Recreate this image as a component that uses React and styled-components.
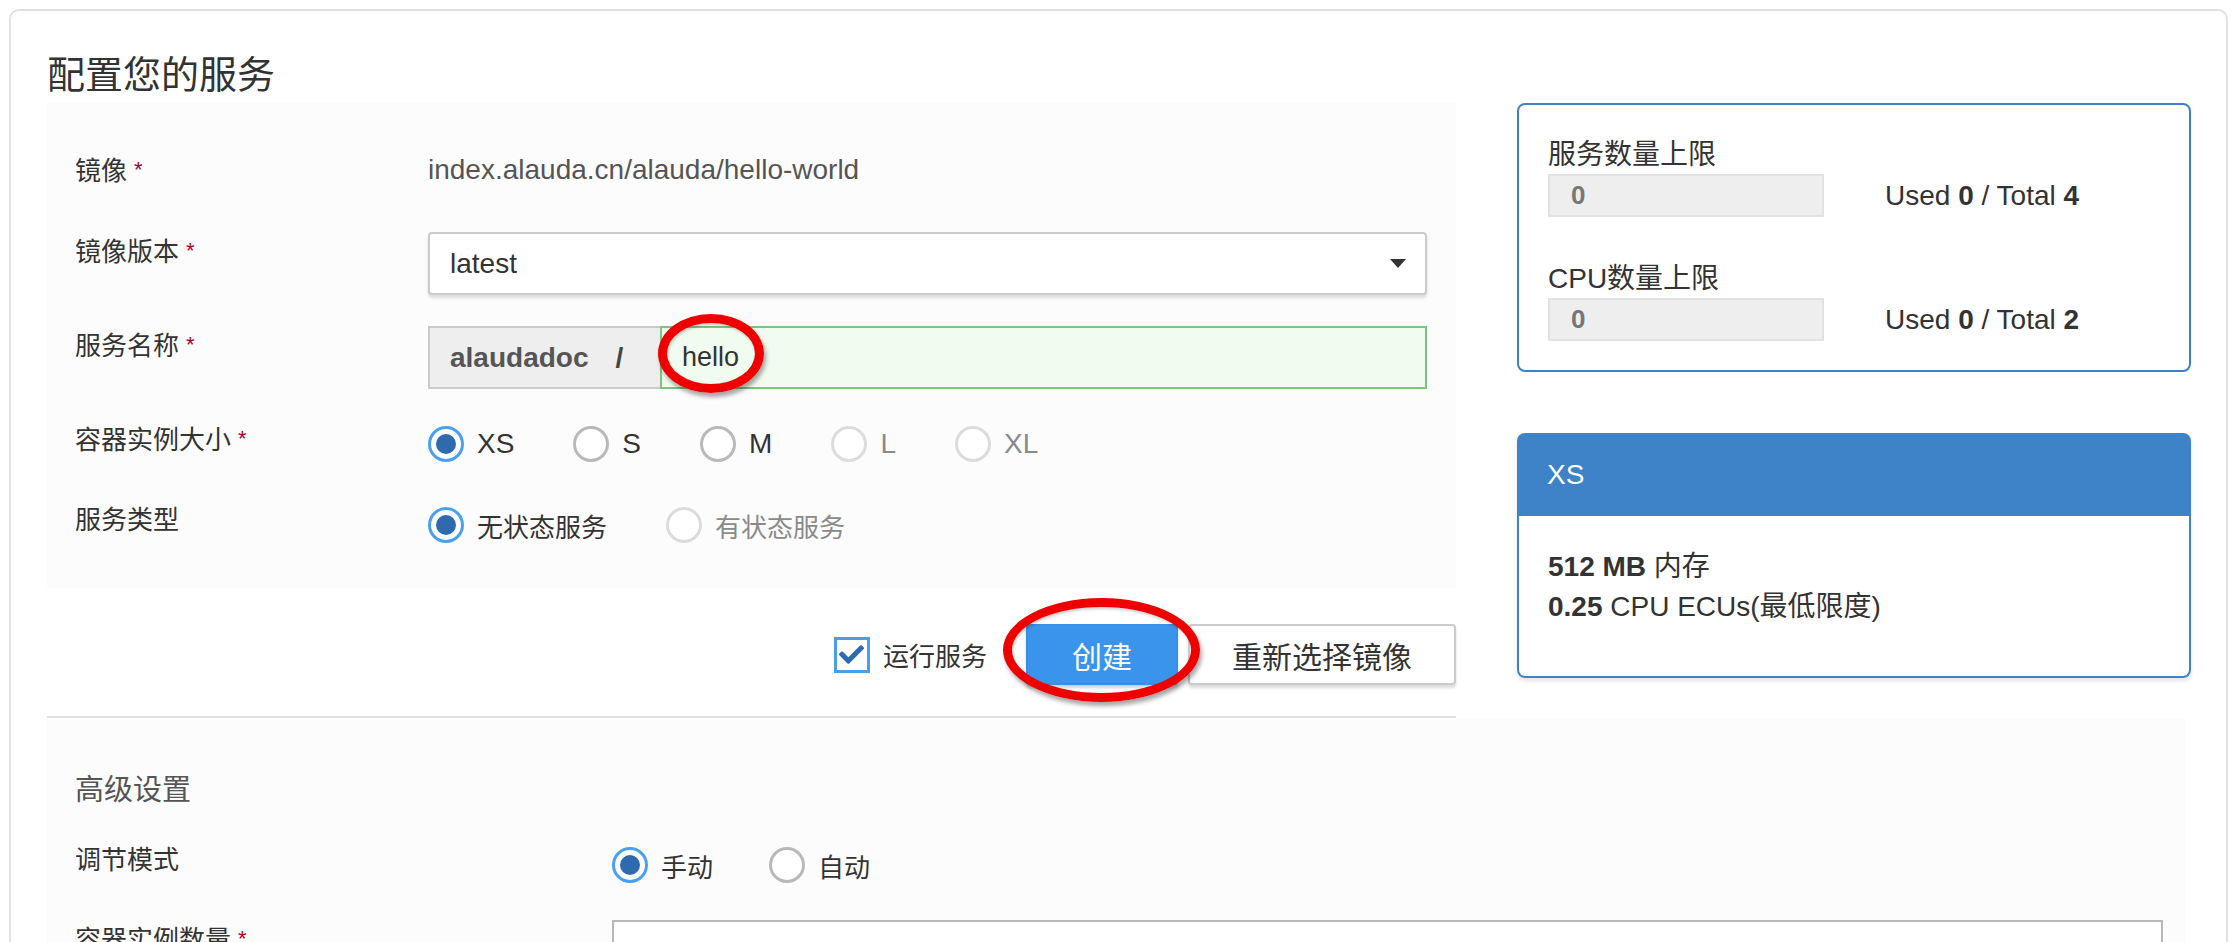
import React from "react";
import styled, { createGlobalStyle } from "styled-components";
import { FaCheck } from "react-icons/fa";

const GlobalStyle = createGlobalStyle`
  html, body { margin: 0; padding: 0; background: #fff; overflow: hidden; }
  body { font-family: "Liberation Sans", "Noto Sans CJK SC", sans-serif; color: #333; }
  * { box-sizing: border-box; }
`;

const Page = styled.div`
  padding: 9px 6px 0 9px;
  height: 942px;
`;

const Card = styled.div`
  border: 2px solid #e1e1e1;
  border-bottom: none;
  border-radius: 10px 10px 0 0;
  padding: 41px 35px 60px 36px;
  min-height: 1000px;
`;

const Title = styled.h1`
  margin: 0 0 5px;
  font-size: 38px;
  line-height: 46px;
  font-weight: normal;
  color: #333;
`;

const TopRow = styled.div`
  display: flex;
  gap: 61px;
  align-items: flex-start;
`;

const LeftCol = styled.div`
  flex: 0 0 1409px;
`;

const RightCol = styled.div`
  flex: 0 0 674px;
`;

const FormArea = styled.div`
  background: #fcfcfc;
  padding: 35px 29px 37px 28px;
`;

const FormRow = styled.div`
  display: flex;
  align-items: flex-start;
  margin-bottom: ${(p) => p.$gap ?? 31}px;
  &:last-child { margin-bottom: 0; }
`;

const Label = styled.div`
  flex: 0 0 ${(p) => p.$width}px;
  font-size: 26px;
  line-height: 38px;
  padding-top: ${(p) => p.$pad || 0}px;
  color: #333;
`;

const Req = styled.span`
  color: #a3002c;
  font-size: 22px;
  margin-left: 7px;
  vertical-align: 3px;
`;

const Control = styled.div`
  flex: 1;
`;

const StaticValue = styled.div`
  padding: 13px 0 12px;
  font-size: 28px;
  line-height: 38px;
  color: #555;
`;

const Select = styled.div`
  height: 63px;
  border: 2px solid #cbcbcb;
  border-radius: 4px;
  background: #fff;
  box-shadow: 0 3px 3px rgba(0, 0, 0, 0.12);
  display: flex;
  align-items: center;
  justify-content: space-between;
  padding: 0 19px 0 20px;
  font-size: 28px;
  color: #333;
`;

const Caret = styled.span`
  width: 0;
  height: 0;
  border-left: 8px solid transparent;
  border-right: 8px solid transparent;
  border-top: 9px solid #333;
`;

const InputGroup = styled.div`
  display: flex;
  height: 63px;
`;

const Addon = styled.div`
  flex: 0 0 232px;
  background: #eee;
  border: 2px solid #cbcbcb;
  border-right: none;
  display: flex;
  align-items: center;
  padding-left: 20px;
  font-size: 28px;
  font-weight: bold;
  color: #555;
`;

const Slash = styled.span`
  margin-left: 27px;
  color: #444;
`;

const ValidField = styled.div`
  position: relative;
  flex: 1;
  background: #effcef;
  border: 2px solid #7dc47d;
  display: flex;
  align-items: center;
  padding-left: 20px;
  font-size: 27px;
  color: #333;
`;

const Mark = styled.span`
  position: absolute;
  left: ${(p) => p.$left}px;
  top: ${(p) => p.$top}px;
  width: ${(p) => p.$w}px;
  height: ${(p) => p.$h}px;
  border: 9px solid #ee0000;
  border-radius: 50%;
  box-shadow: 2px 4px 4px rgba(0, 0, 0, 0.35), inset 1px 2px 3px rgba(0, 0, 0, 0.2);
  pointer-events: none;
  z-index: 2;
`;

const RadioGroup = styled.div`
  display: flex;
  gap: ${(p) => p.$gap || 58}px;
  padding-top: 6px;
  height: 50px;
`;

const RadioItem = styled.label`
  display: flex;
  align-items: center;
  gap: 13px;
  font-size: ${(p) => (p.$cjk ? 26 : 28)}px;
  color: ${(p) => (p.$disabled ? "#8a8a8a" : "#333")};
  height: 36px;
`;

const Circle = styled.span`
  width: 36px;
  height: 36px;
  border-radius: 50%;
  background: #fff;
  border: 3px solid ${(p) => (p.$checked ? "#4aa0f0" : p.$disabled ? "#dcdcdc" : "#b9b9b9")};
  display: flex;
  align-items: center;
  justify-content: center;
  &::after {
    content: "";
    display: ${(p) => (p.$checked ? "block" : "none")};
    width: 20px;
    height: 20px;
    border-radius: 50%;
    background: #2e6aad;
  }
`;

const Actions = styled.div`
  display: flex;
  justify-content: flex-end;
  align-items: center;
  margin-top: 36px;
  height: 61px;
`;

const CheckLabel = styled.label`
  display: flex;
  align-items: center;
  gap: 13px;
  margin-right: 39px;
  font-size: 26px;
  color: #333;
`;

const CheckBox = styled.span`
  width: 36px;
  height: 36px;
  border: 3px solid #4a9fe8;
  background: #fff;
  display: flex;
  align-items: center;
  justify-content: center;
  color: #2d6bb0;
`;

const BtnWrap = styled.div`
  position: relative;
  margin-right: ${(p) => p.$mr || 0}px;
`;

const Button = styled.button`
  height: 61px;
  padding: 0 ${(p) => p.$px}px;
  font-family: inherit;
  font-size: 30px;
  border-radius: 4px;
  border: 2px solid ${(p) => (p.$primary ? "#3790e6" : "#cbcbcb")};
  background: ${(p) => (p.$primary ? "#3a94ec" : "#fff")};
  color: ${(p) => (p.$primary ? "#fff" : "#333")};
  box-shadow: 0 3px 3px rgba(0, 0, 0, ${(p) => (p.$primary ? 0.18 : 0.14)});
`;

const Divider = styled.div`
  margin-top: 31px;
  height: 2px;
  background: #e2e2e2;
`;

const Advanced = styled.div`
  margin: 1px 6px 0 0;
  background: #fcfcfc;
  padding: 51px 22px 40px 28px;
`;

const AdvTitle = styled.div`
  font-size: 29px;
  line-height: 40px;
  color: #555;
  margin-bottom: 31px;
`;

const TextInput = styled.div`
  height: 63px;
  background: #fff;
  border: 2px solid #b8b8b8;
`;

const QuotaBox = styled.div`
  border: 2px solid #3f80c8;
  border-radius: 8px;
  background: #fff;
  padding: 31px 29px 29px 29px;
`;

const QuotaGroup = styled.div`
  & + & { margin-top: 43px; }
`;

const QuotaLabel = styled.div`
  font-size: 28px;
  line-height: 38px;
  color: #333;
`;

const QuotaLine = styled.div`
  display: flex;
  align-items: center;
  gap: 61px;
`;

const QuotaInput = styled.div`
  flex: 0 0 276px;
  height: 43px;
  background: #eee;
  border: 2px solid #e2e2e2;
  display: flex;
  align-items: center;
  padding-left: 21px;
  font-size: 26px;
  font-weight: bold;
  color: #777;
`;

const UsedText = styled.div`
  font-size: 28px;
  color: #333;
  b { font-weight: bold; }
`;

const SizeCard = styled.div`
  margin-top: 61px;
  border-radius: 8px;
  box-shadow: 0 3px 4px rgba(0, 0, 0, 0.1);
`;

const SizeHeader = styled.div`
  height: 83px;
  background: #3e82c7;
  border-radius: 8px 8px 0 0;
  color: #fff;
  font-size: 28px;
  display: flex;
  align-items: center;
  padding-left: 30px;
`;

const SizeBody = styled.div`
  border: 2px solid #3e82c7;
  border-top: none;
  border-radius: 0 0 8px 8px;
  background: #fff;
  padding: 31px 28px 49px 29px;
  font-size: 28px;
  line-height: 40px;
  color: #333;
  b { font-weight: bold; }
`;

function Radio({ label, checked, disabled, cjk }) {
  return (
    <RadioItem $disabled={disabled} $cjk={cjk}>
      <Circle $checked={checked} $disabled={disabled} />
      {label}
    </RadioItem>
  );
}

const sizes = [
  { label: "XS", checked: true },
  { label: "S" },
  { label: "M" },
  { label: "L", disabled: true },
  { label: "XL", disabled: true },
];

export default function App() {
  return (
    <Page>
      <GlobalStyle />
      <Card>
        <Title>配置您的服务</Title>
        <TopRow>
          <LeftCol>
            <FormArea>
              <FormRow>
                <Label $width={353} $pad={13}>镜像<Req>*</Req></Label>
                <Control>
                  <StaticValue>index.alauda.cn/alauda/hello-world</StaticValue>
                </Control>
              </FormRow>
              <FormRow>
                <Label $width={353}>镜像版本<Req>*</Req></Label>
                <Control>
                  <Select>
                    latest
                    <Caret />
                  </Select>
                </Control>
              </FormRow>
              <FormRow>
                <Label $width={353}>服务名称<Req>*</Req></Label>
                <Control>
                  <InputGroup>
                    <Addon>
                      alaudadoc<Slash>/</Slash>
                    </Addon>
                    <ValidField>
                      hello
                      <Mark $left={-4} $top={-14} $w={106} $h={79} />
                    </ValidField>
                  </InputGroup>
                </Control>
              </FormRow>
              <FormRow>
                <Label $width={353}>容器实例大小<Req>*</Req></Label>
                <Control>
                  <RadioGroup $gap={59}>
                    {sizes.map((s) => (
                      <Radio key={s.label} {...s} />
                    ))}
                  </RadioGroup>
                </Control>
              </FormRow>
              <FormRow>
                <Label $width={353}>服务类型</Label>
                <Control>
                  <RadioGroup $gap={59}>
                    <Radio label="无状态服务" checked cjk />
                    <Radio label="有状态服务" disabled cjk />
                  </RadioGroup>
                </Control>
              </FormRow>
            </FormArea>

            <Actions>
              <CheckLabel>
                <CheckBox>
                  <FaCheck size={25} />
                </CheckBox>
                运行服务
              </CheckLabel>
              <BtnWrap $mr={10}>
                <Button $primary $px={44}>创建</Button>
                <Mark $left={-23} $top={-26} $w={197} $h={104} />
              </BtnWrap>
              <BtnWrap>
                <Button $px={42}>重新选择镜像</Button>
              </BtnWrap>
            </Actions>
            <Divider />
          </LeftCol>

          <RightCol>
            <QuotaBox>
              <QuotaGroup>
                <QuotaLabel>服务数量上限</QuotaLabel>
                <QuotaLine>
                  <QuotaInput>0</QuotaInput>
                  <UsedText>
                    Used <b>0</b> / Total <b>4</b>
                  </UsedText>
                </QuotaLine>
              </QuotaGroup>
              <QuotaGroup>
                <QuotaLabel>CPU数量上限</QuotaLabel>
                <QuotaLine>
                  <QuotaInput>0</QuotaInput>
                  <UsedText>
                    Used <b>0</b> / Total <b>2</b>
                  </UsedText>
                </QuotaLine>
              </QuotaGroup>
            </QuotaBox>

            <SizeCard>
              <SizeHeader>XS</SizeHeader>
              <SizeBody>
                <div>
                  <b>512 MB</b> 内存
                </div>
                <div>
                  <b>0.25</b> CPU ECUs(最低限度)
                </div>
              </SizeBody>
            </SizeCard>
          </RightCol>
        </TopRow>

        <Advanced>
          <AdvTitle>高级设置</AdvTitle>
          <FormRow $gap={29}>
            <Label $width={537}>调节模式</Label>
            <Control>
              <RadioGroup $gap={56}>
                <Radio label="手动" checked cjk />
                <Radio label="自动" cjk />
              </RadioGroup>
            </Control>
          </FormRow>
          <FormRow>
            <Label $width={537}>容器实例数量<Req>*</Req></Label>
            <Control>
              <TextInput />
            </Control>
          </FormRow>
        </Advanced>
      </Card>
    </Page>
  );
}
